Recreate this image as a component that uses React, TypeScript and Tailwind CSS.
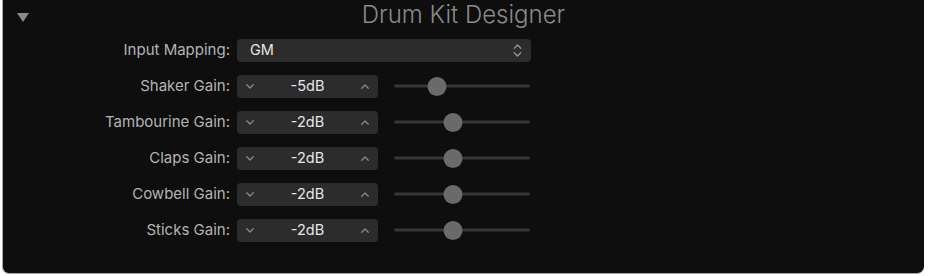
import { FC } from "react";

interface GainRow {
  label: string;
  db: number;
}

const gains: GainRow[] = [
  { label: "Shaker Gain:", db: -5 },
  { label: "Tambourine Gain:", db: -2 },
  { label: "Claps Gain:", db: -2 },
  { label: "Cowbell Gain:", db: -2 },
  { label: "Sticks Gain:", db: -2 },
];

const ChevronDown: FC<{ className?: string }> = ({ className }) => (
  <svg viewBox="0 0 8 5" className={className} fill="none">
    <path d="M0.75 0.75 L4 4 L7.25 0.75" stroke="currentColor" strokeWidth="1.2" strokeLinecap="round" strokeLinejoin="round" />
  </svg>
);

const ChevronUp: FC<{ className?: string }> = ({ className }) => (
  <svg viewBox="0 0 8 5" className={className} fill="none">
    <path d="M0.75 4.25 L4 1 L7.25 4.25" stroke="currentColor" strokeWidth="1.2" strokeLinecap="round" strokeLinejoin="round" />
  </svg>
);

const Label: FC<{ text: string }> = ({ text }) => (
  <span className="mr-[7px] w-[227px] shrink-0 text-right text-[15px] text-[#b4b4b4]">
    {text}
  </span>
);

const Slider: FC<{ db: number }> = ({ db }) => {
  // knob centre sits mid-track at 0dB
  const pct = 51 + db * 3.9;
  return (
    <div className="relative ml-4 h-[19px] w-[136px]">
      <div className="absolute inset-x-0 top-1/2 h-[3px] -translate-y-1/2 rounded-full bg-[#363636]" />
      <div
        className="absolute top-0 h-[19px] w-[19px] -translate-x-1/2 rounded-full bg-[#6a6a6a]"
        style={{ left: `${pct}%` }}
      />
    </div>
  );
};

const Stepper: FC<{ db: number }> = ({ db }) => (
  <div className="flex h-[23px] w-[141px] items-center justify-between rounded-[4px] bg-[#2c2c2c] px-[9px] text-[#8c8c8c]">
    <ChevronDown className="h-[5px] w-[8px]" />
    <span className="text-[14.5px] text-[#e6e6e6]">{db}dB</span>
    <ChevronUp className="h-[5px] w-[8px]" />
  </div>
);

export default function App() {
  return (
    <div
      className="ml-[2px] h-[274px] w-[922px] rounded-b-[7px] border-b border-l border-[#a8a8a8] bg-[#0e0e0e]"
      style={{ fontFamily: "Inter, 'Liberation Sans', sans-serif" }}
    >
      <div className="grid h-[32px] grid-cols-[1fr_auto_1fr] items-center">
        <svg viewBox="0 0 12 9" className="ml-[14px] mt-[3px] h-[9px] w-[12px] text-[#8a8a8a]">
          <path d="M0 0 H12 L6 9 Z" fill="currentColor" />
        </svg>
        <span className="-mt-[3px] text-[24px] font-light leading-[30px] text-[#8a8a8a]">
          Drum Kit Designer
        </span>
        <span />
      </div>

      <div className="flex flex-col">
        <div className="flex h-[36px] items-center">
          <Label text="Input Mapping:" />
          <div className="flex h-[23px] w-[294px] items-center justify-between rounded-[4px] bg-[#2c2c2c] pl-[13px] pr-[9px]">
            <span className="text-[14.5px] text-[#e6e6e6]">GM</span>
            <div className="flex flex-col items-center gap-[3px] text-[#9a9a9a]">
              <ChevronUp className="h-[5px] w-[9px]" />
              <ChevronDown className="h-[5px] w-[9px]" />
            </div>
          </div>
        </div>

        {gains.map((row) => (
          <div key={row.label} className="flex h-[36px] items-center">
            <Label text={row.label} />
            <Stepper db={row.db} />
            <Slider db={row.db} />
          </div>
        ))}
      </div>
    </div>
  );
}
